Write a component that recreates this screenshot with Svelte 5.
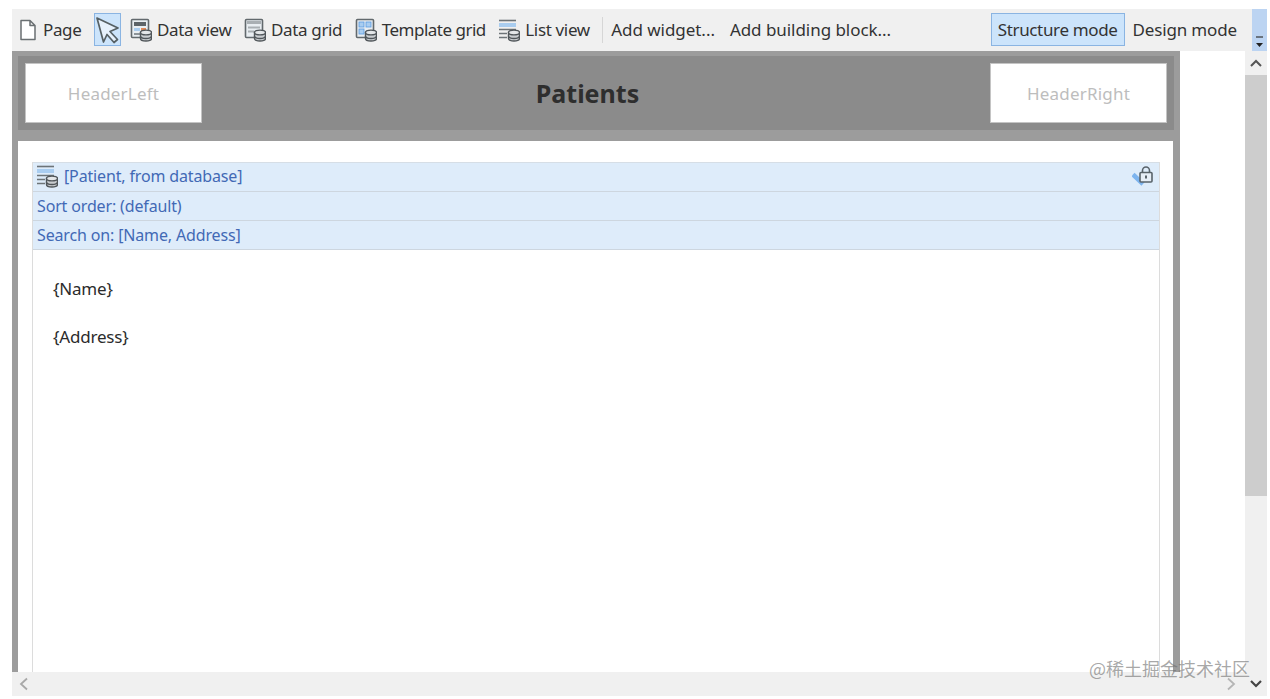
<script>
    const tools = [
        { name: 'Data view', icon: 'view' },
        { name: 'Data grid', icon: 'grid' },
        { name: 'Template grid', icon: 'template' },
        { name: 'List view', icon: 'list' }
    ];
</script>

{#snippet dbicon(kind)}
    <svg class="ic" width="22" height="24" viewBox="0 0 22 24">
        {#if kind === 'list'}
            <path d="M1 2.500h17" stroke="#6d7478" stroke-width="1.600" />
            <rect x="1" y="5" width="17" height="4" fill="#a9cdf0" />
            <path d="M1 11.500h17M1 15.500h8M1 19.500h8" stroke="#6d7478" stroke-width="1.500" />
        {:else}
            <rect x="1.500" y="1.500" width="17" height="18" rx="1" fill="#e9eef2" stroke="#62696d" stroke-width="1.600" />
            {#if kind === 'view'}
                <rect x="4" y="4" width="12" height="4" fill="#5c6368" />
                <rect x="4" y="10" width="6" height="3" fill="#a9cdf0" />
                <rect x="11" y="10" width="5" height="3" fill="#e08a5a" />
                <rect x="4" y="15" width="6" height="2" fill="#8d9499" />
            {:else if kind === 'grid'}
                <rect x="3" y="3" width="14" height="3" fill="#a9afb3" />
                <path d="M4 9.500h12M4 13.500h6" stroke="#a9afb3" stroke-width="2" />
            {:else}
                <rect x="4" y="4" width="5" height="5" fill="#a9cdf0" stroke="#5b9be0" stroke-width=".8" />
                <rect x="11" y="4" width="5" height="5" fill="#a9cdf0" stroke="#5b9be0" stroke-width=".8" />
                <rect x="4" y="11" width="5" height="5" fill="#a9cdf0" stroke="#5b9be0" stroke-width=".8" />
            {/if}
        {/if}
        <path d="M10.500 14.500v6c0 1.400 2.500 2.500 5.500 2.500s5.500-1.100 5.500-2.500v-6z" fill="#c9cdd0" stroke="#50565a" stroke-width="1.400" />
        <ellipse cx="16" cy="14.500" rx="5.500" ry="2.400" fill="#e4e7e9" stroke="#50565a" stroke-width="1.400" />
        <path d="M10.500 18c0 1.400 2.500 2.500 5.500 2.500s5.500-1.100 5.500-2.500" fill="none" stroke="#50565a" stroke-width="1.400" />
    </svg>
{/snippet}

<div class="window">
    <div class="toolbar">
        <div class="tool page">
            <svg class="ic" width="18" height="22" viewBox="0 0 18 22">
                <path d="M2 1.500h9l5 5v14H2z M11 1.500v5h5" fill="#fff" stroke="#6a6f72" stroke-width="1.500" stroke-linejoin="round" />
            </svg>
            <span>Page</span>
        </div>
        <div class="pointer">
            <svg width="24" height="28" viewBox="0 0 24 28">
                <path d="M2 2 L23 12 L15 15.500 L22.500 23.500 L19 26.500 L12 18.500 L8.500 26 Z" fill="#e6f1fc" stroke="#566064" stroke-width="1.700" stroke-linejoin="round" />
            </svg>
        </div>
        {#each tools as t}
            <div class="tool {t.icon}">
                {@render dbicon(t.icon)}
                <span>{t.name}</span>
            </div>
        {/each}
        <div class="sep"></div>
        <div class="tool add">Add widget...</div>
        <div class="tool add">Add building block...</div>
        <div class="spacer"></div>
        <div class="mode on">Structure mode</div>
        <div class="mode design">Design mode</div>
        <div class="overflow">
            <svg width="10" height="14" viewBox="0 0 10 14">
                <path d="M1 2h7" stroke="#333" stroke-width="1.200" />
                <path d="M1 8h7L4.500 12z" fill="#222" />
            </svg>
        </div>
    </div>

    <div class="main">
        <div class="canvas-wrap">
            <div class="canvas">
                <div class="layout">
                    <div class="header">
                        <div class="slot">HeaderLeft</div>
                        <div class="title">Patients</div>
                        <div class="slot">HeaderRight</div>
                    </div>
                    <div class="content">
                        <div class="listview">
                            <div class="row first">
                                {@render dbicon('list')}
                                <span class="src">[Patient, from database]</span>
                                <svg class="lock" width="22" height="22" viewBox="0 0 22 22">
                                    <path d="M1 9.500 L11 19" stroke="#7db4ee" stroke-width="4.500" />
                                    <rect x="8" y="7.500" width="12" height="9.500" rx="1" fill="#e6eef6" stroke="#59636a" stroke-width="1.600" />
                                    <path d="M10.500 7.500V5.500a3.500 3.500 0 0 1 7 0v2" fill="none" stroke="#59636a" stroke-width="1.600" />
                                    <rect x="13" y="10.500" width="2" height="3" fill="#59636a" />
                                </svg>
                            </div>
                            <div class="row">Sort order: (default)</div>
                            <div class="row">Search on: [Name, Address]</div>
                            <div class="fields">
                                <div>{'{Name}'}</div>
                                <div>{'{Address}'}</div>
                            </div>
                        </div>
                    </div>
                </div>
            </div>
            <div class="hbar">
                <svg width="12" height="14" viewBox="0 0 12 14"><path d="M9 1.500 3 7l6 5.500" fill="none" stroke="#a8a8a8" stroke-width="1.800" /></svg>
                <svg width="12" height="14" viewBox="0 0 12 14"><path d="M3 1.500 9 7l-6 5.500" fill="none" stroke="#b5b5b5" stroke-width="1.800" /></svg>
            </div>
        </div>
        <div class="vbar">
            <div class="arrow">
                <svg width="12" height="8" viewBox="0 0 12 8"><path d="M1 7l5-5 5 5" fill="none" stroke="#555" stroke-width="2" /></svg>
            </div>
            <div class="thumb"></div>
            <div class="arrow down">
                <svg width="12" height="8" viewBox="0 0 12 8"><path d="M1 1l5 5 5-5" fill="none" stroke="#444" stroke-width="2.200" /></svg>
            </div>
        </div>
    </div>
    <div class="watermark">@稀土掘金技术社区</div>
</div>

<style>
    :global(body) {
        margin: 0;
        background: #fff;
    }

    .window {
        position: relative;
        width: 1255px;
        height: 687px;
        margin: 9px 0 0 12px;
        display: flex;
        flex-direction: column;
        font-family: "Noto Sans", "Open Sans", sans-serif;
        font-size: 17px;
        color: #333;
        overflow: hidden;
    }

    /* toolbar */
    .toolbar {
        height: 42px;
        flex: none;
        box-sizing: border-box;
        padding: 0 0 1px 7px;
        background: #f0f0f0;
        display: flex;
        align-items: center;
        letter-spacing: -0.35px;
    }

    .tool {
        display: flex;
        align-items: center;
        gap: 5px;
        white-space: nowrap;
        margin-right: 12.5px;
    }

    .page {
        gap: 6px;
    }

    .template {
        letter-spacing: -0.5px;
    }

    .pointer {
        width: 25px;
        height: 31px;
        margin-right: 9px;
        background: #cce4fb;
        border: 1px solid #8ab4e2;
        display: flex;
        align-items: center;
        justify-content: center;
    }

    .ic {
        flex: none;
    }

    .sep {
        width: 1px;
        height: 26px;
        background: #d6d6d6;
        margin-right: 8px;
    }

    .add {
        margin-right: 15px;
        letter-spacing: -0.05px;
    }

    .spacer {
        flex: 1;
    }

    .mode {
        height: 33px;
        display: flex;
        align-items: center;
        padding: 0 6px;
        border: 1px solid transparent;
        box-sizing: border-box;
        white-space: nowrap;
    }

    .mode.on {
        background: #cce4fb;
        border-color: #8ab4e2;
    }

    .mode.design {
        padding: 0 7px;
        letter-spacing: -0.15px;
    }

    .overflow {
        width: 15px;
        height: 42px;
        margin-left: 7px;
        background: #bcd4f2;
        display: flex;
        align-items: flex-end;
        justify-content: center;
        padding-bottom: 2px;
        box-sizing: border-box;
        align-self: flex-start;
    }

    /* canvas */
    .main {
        flex: 1;
        display: flex;
        min-height: 0;
    }

    .canvas-wrap {
        flex: 1;
        display: flex;
        flex-direction: column;
        min-width: 0;
    }

    .canvas {
        flex: 1;
        background: #fff;
        min-height: 0;
        overflow: hidden;
    }

    .layout {
        width: 1168px;
        height: 100%;
        background: #9c9c9c;
        display: flex;
        flex-direction: column;
    }

    .header {
        height: 74px;
        flex: none;
        margin: 5px 6px 0;
        padding: 8px;
        box-sizing: border-box;
        background: #8b8b8b;
        display: flex;
        justify-content: space-between;
        align-items: center;
    }

    .slot {
        width: 175px;
        height: 58px;
        background: #fff;
        color: #bdbdbd;
        letter-spacing: 0.2px;
        display: flex;
        align-items: center;
        justify-content: center;
        box-shadow: 0 0 0 1px #c4c4c4;
    }

    .title {
        font-size: 25px;
        font-weight: 700;
        color: #2e2e2e;
        margin-right: 17px;
    }

    .content {
        flex: 1;
        margin: 11px 7px 0 6px;
        padding: 21px 13px 0 14px;
        background: #fff;
        min-height: 0;
    }

    .listview {
        height: 100%;
        border-left: 1px solid #dcdcdc;
        border-right: 1px solid #dcdcdc;
        box-sizing: border-box;
    }

    .row {
        height: 29px;
        box-sizing: border-box;
        display: flex;
        align-items: center;
        padding-left: 4px;
        background: #deecfa;
        border-bottom: 1px solid #cdd6df;
        color: #4269b5;
        font-size: 16px;
        letter-spacing: -0.15px;
    }

    .first {
        height: 30px;
        padding: 0 0 3px 3px;
        border-top: 1px solid #d6dee6;
    }

    .src {
        flex: 1;
        margin-left: 6px;
    }

    .lock {
        margin-right: 5px;
    }

    .fields {
        padding: 27px 20px;
        display: flex;
        flex-direction: column;
        gap: 25px;
        color: #2b2b2b;
        letter-spacing: -0.2px;
        line-height: 23px;
    }

    /* scrollbars */
    .hbar {
        height: 24px;
        flex: none;
        background: #f0f0f0;
        display: flex;
        justify-content: space-between;
        align-items: center;
        padding: 0 8px 0 6px;
    }

    .vbar {
        width: 22px;
        flex: none;
        background: #f0f0f0;
        display: flex;
        flex-direction: column;
    }

    .arrow {
        height: 24px;
        flex: none;
        display: flex;
        align-items: center;
        justify-content: center;
    }

    .thumb {
        height: 421px;
        flex: none;
        background: #cdcdcd;
    }

    .down {
        margin-top: auto;
    }

    .watermark {
        position: absolute;
        right: 17px;
        bottom: 15px;
        font-family: "Noto Sans CJK SC", sans-serif;
        font-size: 18px;
        color: rgba(110, 110, 110, 0.6);
    }
</style>
